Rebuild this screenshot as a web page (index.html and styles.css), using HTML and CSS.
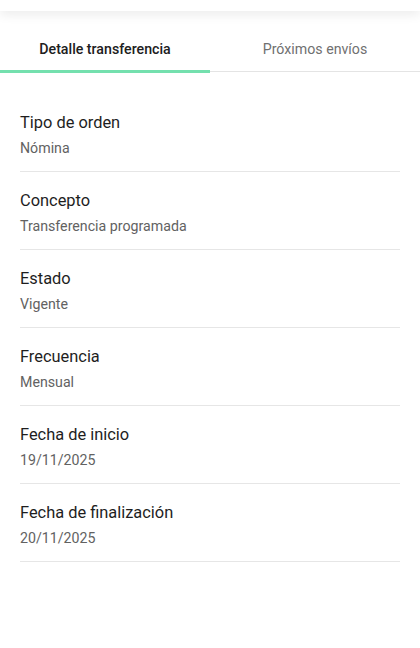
FILE: index.html
```html
<!DOCTYPE html>
<html>
<head lang="es">
    <meta charset="UTF-8">
    <title>Detalle transferencia</title>
    <link rel="stylesheet" href="styles.css">
</head>
<body>
    <div class="topbar"></div>
    <div class="tabs">
        <div class="tab current">Detalle transferencia</div>
        <div class="tab">Próximos envíos</div>
    </div>
    <ul class="detail">
        <li>
            <div class="label">Tipo de orden</div>
            <div class="value">Nómina</div>
        </li>
        <li>
            <div class="label">Concepto</div>
            <div class="value">Transferencia programada</div>
        </li>
        <li>
            <div class="label">Estado</div>
            <div class="value">Vigente</div>
        </li>
        <li>
            <div class="label">Frecuencia</div>
            <div class="value">Mensual</div>
        </li>
        <li>
            <div class="label">Fecha de inicio</div>
            <div class="value">19/11/2025</div>
        </li>
        <li>
            <div class="label">Fecha de finalización</div>
            <div class="value">20/11/2025</div>
        </li>
    </ul>
</body>
</html>
```

FILE: styles.css
```css
* {
    margin: 0;
    padding: 0;
    box-sizing: border-box;
}
body {
    background-color: #fff;
    font-family: Roboto, "Noto Sans", sans-serif;
    color: #1c1c1c;
}
.topbar {
    height: 11px;
    background-color: #fff;
    box-shadow: 0 3px 12px rgba(0, 0, 0, 0.09);
    position: relative;
}
.tabs {
    display: flex;
    margin-top: 16px;
    border-bottom: 1px solid #e4e4e4;
}
.tab {
    flex: 1;
    height: 46px;
    display: flex;
    align-items: center;
    justify-content: center;
    font-size: 14.2px;
    color: #707070;
    border-bottom: 3px solid transparent;
    margin-bottom: -2px;
}
.tab.current {
    color: #202020;
    font-weight: 500;
    border-bottom-color: #74e0ae;
}
.detail {
    list-style-type: none;
    margin: 22px 20px 0;
}
.detail li {
    padding: 16px 0 13px;
    border-bottom: 1px solid #e6e6e6;
}
.label {
    font-size: 16.4px;
    line-height: 25px;
    color: #1e1e1e;
}
.value {
    margin-top: 3px;
    font-size: 14.2px;
    line-height: 20px;
    color: #626262;
}
```
